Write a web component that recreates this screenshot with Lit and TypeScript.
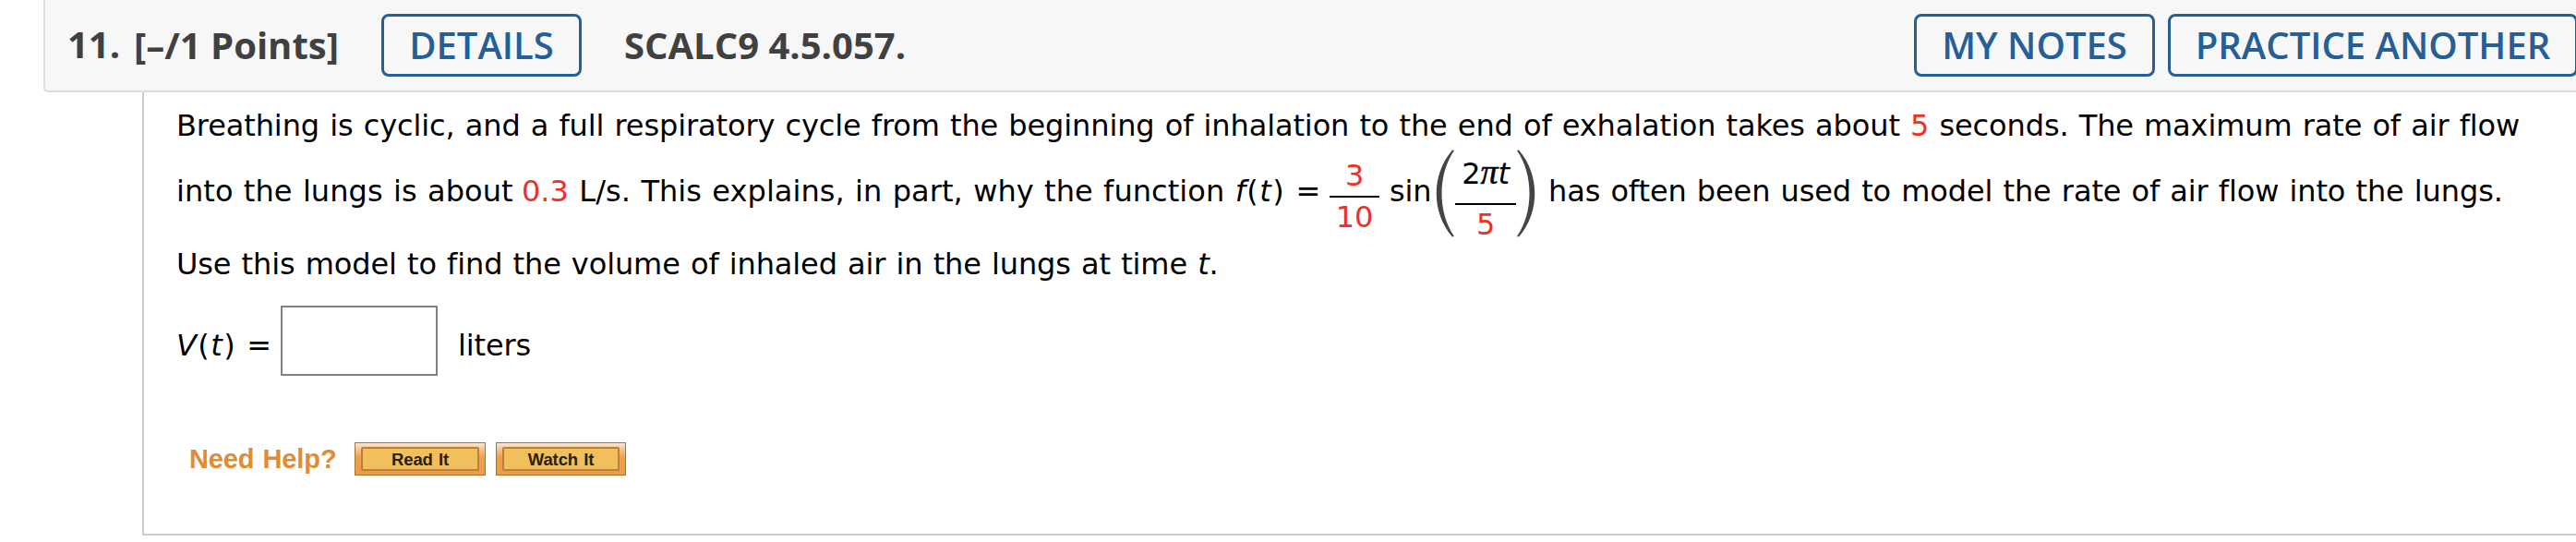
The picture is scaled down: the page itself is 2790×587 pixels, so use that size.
import { LitElement, html, css } from 'lit';
import { customElement, property } from 'lit/decorators.js';

/** Stacked fraction with a slotted numerator and denominator. */
@customElement('wa-frac')
export class WaFrac extends LitElement {
  static styles = css`
    :host {
      display: flex;
      flex-direction: column;
      align-items: center;
      line-height: 40px;
    }
    .bar {
      width: 100%;
      height: 2px;
      margin: var(--gap, 2px) 0 1px;
      background: #000;
    }
  `;

  render() {
    return html`<slot name="num"></slot><div class="bar"></div><slot name="den"></slot>`;
  }
}

/** Tall parenthesis that wraps a fraction. */
@customElement('wa-paren')
export class WaParen extends LitElement {
  @property({ reflect: true }) side: 'left' | 'right' = 'left';

  static styles = css`
    :host {
      display: block;
      width: 21px;
      height: 95px;
    }
    :host([side='right']) {
      transform: scaleX(-1);
    }
    svg {
      display: block;
    }
  `;

  render() {
    return html`
      <svg width="21" height="95" viewBox="0 0 21 95">
        <path d="M18 .5C-5 27 -5 68 18 94.500L20 94C2 68 2 27 20 1Z" fill="#444" />
      </svg>
    `;
  }
}

@customElement('app-root')
export class AppRoot extends LitElement {
  static styles = css`
    :host {
      display: block;
      width: 2790px;
      height: 587px;
      overflow: hidden;
      background: #fff;
      color: #000;
      font: 32px/40px 'DejaVu Sans', sans-serif;
    }
    * {
      box-sizing: border-box;
    }
    header {
      display: flex;
      width: 2800px;
      height: 100px;
      margin-left: 47px;
      padding: 15px 0 0 24px;
      background: #f7f7f7;
      border: solid #ddd;
      border-width: 0 0 2px 2px;
      border-bottom-left-radius: 5px;
      color: #404040;
      font: 700 40px/68px 'Open Sans', sans-serif;
      white-space: nowrap;
    }
    .number {
      width: 72px;
      line-height: 65px;
    }
    .points {
      width: 268px;
    }
    .code {
      width: 1397px;
      margin-left: 46px;
    }
    .btn {
      height: 68px;
      padding: 0;
      border: 3px solid #265f96;
      border-radius: 8px;
      background: none;
      color: #265f96;
      font: 600 40px/62px 'Open Sans', sans-serif;
      text-align: center;
    }
    .details {
      width: 217px;
    }
    .notes {
      width: 261px;
      margin-right: 14px;
    }
    .practice {
      width: 444px;
    }
    main {
      width: 2700px;
      height: 480px;
      margin-left: 154px;
      padding: 16px 0 0 35px;
      border: solid #ccc;
      border-width: 0 0 2px 2px;
      white-space: nowrap;
      word-spacing: 1.1px;
      letter-spacing: -0.11px;
    }
    .line {
      height: 40px;
    }
    .math {
      display: flex;
      height: 110px;
    }
    .math > span {
      margin-top: 31px;
    }
    .lead {
      width: 1249px;
      letter-spacing: 0.06px;
    }
    .lead .red {
      margin-left: -2px;
    }
    .fn {
      letter-spacing: 1.4px;
    }
    .tenth {
      width: 54px;
      margin-top: 14px;
    }
    .sin {
      width: 50px;
      margin-left: 11px;
    }
    wa-paren {
      margin-top: 6px;
    }
    .angle {
      --gap: 12px;
      width: 66px;
      margin-top: 12px;
    }
    .tail {
      margin-left: 14px;
    }
    .red {
      color: #ee3124;
    }
    .pi {
      font: italic 38px/0 'Liberation Serif', serif;
      -webkit-text-stroke: 0.5px #000;
    }
    .answer {
      display: flex;
      height: 76px;
      margin-top: 25px;
      line-height: 86px;
    }
    .label {
      width: 113px;
    }
    input {
      width: 170px;
      height: 76px;
      margin-right: 22px;
      border: 2px solid #808080;
      background: #fff;
    }
    .help {
      display: flex;
      margin: 72px 0 0 14px;
      color: #e18b33;
      font: 700 29px/36px 'Liberation Sans', sans-serif;
    }
    .help > span {
      width: 179px;
    }
    .gold {
      width: 142px;
      height: 36px;
      margin-right: 11px;
      padding: 4px 6px;
      border: 1px solid #a5742f;
      background: linear-gradient(#fbe6d0, #f4bd83 25%, #eea04c 45%, #eb9c49);
    }
    .gold.watch {
      width: 141px;
    }
    .gold span {
      display: block;
      height: 26px;
      border: 2px solid #b98039;
      border-radius: 2px;
      background: #f2bf5d;
      color: #2a2008;
      font: 700 18.500px/24px 'Liberation Sans', sans-serif;
      text-align: center;
    }
  `;

  render() {
    return html`
      <header>
        <span class="number">11.</span>
        <span class="points">[–/1 Points]</span>
        <button class="btn details">DETAILS</button>
        <span class="code">SCALC9 4.5.057.</span>
        <button class="btn notes">MY NOTES</button>
        <button class="btn practice">PRACTICE ANOTHER</button>
      </header>
      <main>
        <div class="line">Breathing is cyclic, and a full respiratory cycle from the beginning of inhalation to the end of exhalation takes about <span class="red">5</span> seconds. The maximum rate of air flow</div>
        <div class="math">
          <span class="lead">into the lungs is about <span class="red">0.3</span> L/s. This explains, in part, why the function <span class="fn"><i>f</i>(<i>t</i>)</span> =</span>
          <wa-frac class="tenth">
            <span slot="num" class="red">3</span>
            <span slot="den" class="red">10</span>
          </wa-frac>
          <span class="sin">sin</span>
          <wa-paren side="left"></wa-paren>
          <wa-frac class="angle">
            <span slot="num">2<span class="pi">π</span><i>t</i></span>
            <span slot="den" class="red">5</span>
          </wa-frac>
          <wa-paren side="right"></wa-paren>
          <span class="tail">has often been used to model the rate of air flow into the lungs.</span>
        </div>
        <div class="line">Use this model to find the volume of inhaled air in the lungs at time <i>t</i>.</div>
        <div class="answer">
          <span class="label"><span class="fn"><i>V</i>(<i>t</i>)</span> =</span>
          <input type="text" />
          <span>liters</span>
        </div>
        <div class="help">
          <span>Need Help?</span>
          <div class="gold"><span>Read It</span></div>
          <div class="gold watch"><span>Watch It</span></div>
        </div>
      </main>
    `;
  }
}

declare global {
  interface HTMLElementTagNameMap {
    'wa-frac': WaFrac;
    'wa-paren': WaParen;
    'app-root': AppRoot;
  }
}
